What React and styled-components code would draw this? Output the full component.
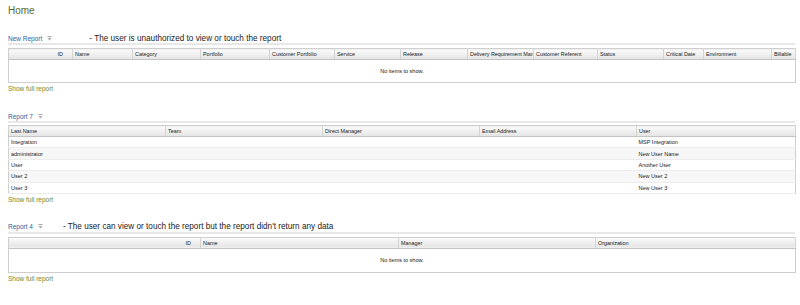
import React from 'react'
import styled, { createGlobalStyle } from 'styled-components'

const Global = createGlobalStyle`
  html, body { margin: 0; padding: 0; background: #fff; }
  body { font-family: "Liberation Sans", Arial, sans-serif; }
`

const Page = styled.div`
  width: 787px;
  padding: 4px 5px 0 8px;
`

const Title = styled.div`
  height: 14px;
  line-height: 14px;
  font-size: 10px;
  color: #5a6a1e;
  margin-bottom: 15px;
`

const Section = styled.div`
  margin-bottom: 17px;
`

const ReportBar = styled.div`
  display: flex;
  align-items: center;
  height: 10px;
  border-bottom: 2px solid #e8e8e8;
  margin-bottom: ${(p) => p.$gap}px;
`

const ReportName = styled.span`
  font-size: 6.5px;
  color: #2b62a3;
`

const Arrow = styled.svg`
  width: 5px;
  height: 5px;
  margin-left: 5px;
`

const Note = styled.span`
  font-size: 8.2px;
  color: #222;
  margin-left: ${(p) => p.$offset}px;
`

const Table = styled.table`
  width: 100%;
  border-collapse: collapse;
  table-layout: fixed;
  border: 1px solid #cfcfcf;
`

const Th = styled.th`
  height: 10px;
  padding: 0 2px;
  font-size: 5.4px;
  font-weight: normal;
  color: #1a1a1a;
  white-space: nowrap;
  overflow: hidden;
  text-align: ${(p) => (p.$right ? 'right' : 'left')};
  padding-right: ${(p) => (p.$right ? 9 : 1)}px;
  background: linear-gradient(#fbfbfb, #e4e4e4);
  border-right: 1px solid #d4d4d4;
  border-bottom: 1px solid #c4c4c4;
`

const Row = styled.tr`
  background: ${(p) => (p.$odd ? '#f7f7f7' : '#fff')};
`

const Td = styled.td`
  height: 10.4px;
  padding: 0 2px;
  font-size: 5.5px;
  color: #1a1a1a;
  white-space: nowrap;
  border-bottom: 1px solid #ececec;
`

const Empty = styled.td`
  height: ${(p) => p.$h}px;
  text-align: center;
  font-size: 5.5px;
  color: #1a1a1a;
`

const ShowFull = styled.div`
  height: 11px;
  line-height: 11px;
  font-size: 6.5px;
  color: #74872c;
`

const DropArrow = () => (
  <Arrow viewBox="0 0 5 5">
    <line x1="0.5" y1="0.5" x2="4.5" y2="0.5" stroke="#a8a8a8" strokeWidth="1" />
    <polygon points="0.5,2 4.5,2 2.5,4.5" fill="#a8a8a8" />
  </Arrow>
)

const reports = [
  {
    name: 'New Report',
    note: '- The user is unauthorized to view or touch the report',
    offset: 37,
    gap: 3,
    empty: 20,
    cols: [
      ['ID', 64, true], ['Name', 60], ['Category', 68], ['Portfolio', 69],
      ['Customer Portfolio', 65], ['Service', 66], ['Release', 67],
      ['Delivery Requirement Man', 66], ['Customer Referent', 64],
      ['Status', 66], ['Critical Date', 40], ['Environment', 68], ['Billable', 24],
    ],
    rows: [],
  },
  {
    name: 'Report 7',
    gap: 2,
    cols: [
      ['Last Name', 157], ['Team', 157], ['Direct Manager', 157],
      ['Email Address', 157], ['User', 159],
    ],
    rows: [
      ['Integration', '', '', '', 'MSP Integration'],
      ['administrator', '', '', '', 'New User Name'],
      ['User', '', '', '', 'Another User'],
      ['User 2', '', '', '', 'New User 2'],
      ['User 3', '', '', '', 'New User 3'],
    ],
  },
  {
    name: 'Report 4',
    note: "- The user can view or touch the report but the report didn't return any data",
    offset: 20,
    gap: 3,
    empty: 21,
    cols: [
      ['ID', 192, true], ['Name', 198], ['Manager', 197], ['Organization', 200],
    ],
    rows: [],
  },
]

const Report = ({ r }) => (
  <Section>
    <ReportBar $gap={r.gap}>
      <ReportName>{r.name}</ReportName>
      <DropArrow />
      {r.note && <Note $offset={r.offset}>{r.note}</Note>}
    </ReportBar>
    <Table>
      <colgroup>
        {r.cols.map(([label, w]) => (
          <col key={label} style={{ width: w }} />
        ))}
      </colgroup>
      <thead>
        <tr>
          {r.cols.map(([label, , right]) => (
            <Th key={label} $right={right}>{label}</Th>
          ))}
        </tr>
      </thead>
      <tbody>
        {r.rows.length === 0 ? (
          <tr>
            <Empty $h={r.empty} colSpan={r.cols.length}>No items to show.</Empty>
          </tr>
        ) : (
          r.rows.map((row, i) => (
            <Row key={i} $odd={i % 2 === 1}>
              {row.map((cell, j) => (
                <Td key={j}>{cell}</Td>
              ))}
            </Row>
          ))
        )}
      </tbody>
    </Table>
    <ShowFull>Show full report</ShowFull>
  </Section>
)

export default function App() {
  return (
    <>
      <Global />
      <Page>
        <Title>Home</Title>
        {reports.map((r) => (
          <Report key={r.name} r={r} />
        ))}
      </Page>
    </>
  )
}
